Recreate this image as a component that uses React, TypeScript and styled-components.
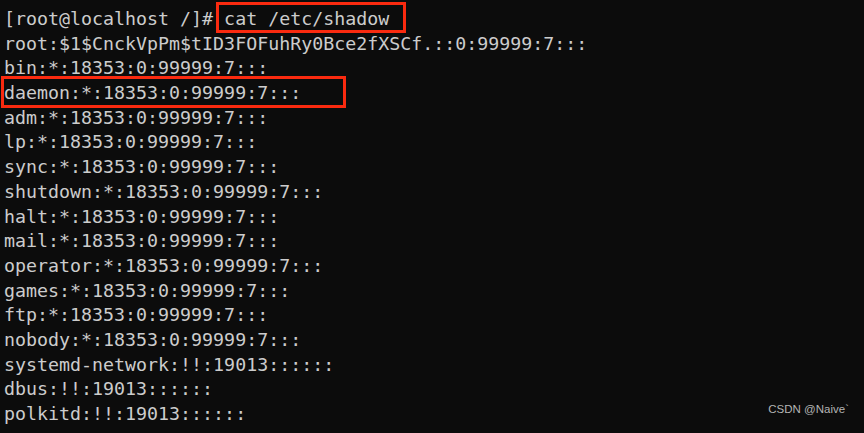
import React from "react";
import styled, { createGlobalStyle } from "styled-components";

const Global = createGlobalStyle`
  html, body { margin: 0; padding: 0; background: #0c0c0c; }
  #root { width: 864px; height: 433px; }
`;

const Terminal = styled.div`
  position: relative;
  width: 864px;
  height: 433px;
  box-sizing: border-box;
  padding: 7px 0 0 4px;
  background: #0c0c0c;
  color: #cccccc;
  font-family: "DejaVu Sans Mono", "Liberation Mono", monospace;
  font-size: 18.3px;
  overflow: hidden;
  display: flex;
  flex-direction: column;
`;

const Line = styled.div`
  height: 24.7px;
  line-height: 24.7px;
  white-space: pre;
`;

const Annotation = styled.div<{ $x: number; $y: number; $w: number; $h: number }>`
  position: absolute;
  left: ${(p) => p.$x}px;
  top: ${(p) => p.$y}px;
  width: ${(p) => p.$w}px;
  height: ${(p) => p.$h}px;
  box-sizing: border-box;
  border: 3px solid #fa2a0f;
  pointer-events: none;
`;

const Watermark = styled.div`
  position: absolute;
  right: 15px;
  bottom: 18px;
  font-family: "Liberation Sans", Arial, sans-serif;
  font-size: 11.5px;
  color: #b4b4b4;
`;

const lines = [
  "[root@localhost /]# cat /etc/shadow",
  "root:$1$CnckVpPm$tID3FOFuhRy0Bce2fXSCf.::0:99999:7:::",
  "bin:*:18353:0:99999:7:::",
  "daemon:*:18353:0:99999:7:::",
  "adm:*:18353:0:99999:7:::",
  "lp:*:18353:0:99999:7:::",
  "sync:*:18353:0:99999:7:::",
  "shutdown:*:18353:0:99999:7:::",
  "halt:*:18353:0:99999:7:::",
  "mail:*:18353:0:99999:7:::",
  "operator:*:18353:0:99999:7:::",
  "games:*:18353:0:99999:7:::",
  "ftp:*:18353:0:99999:7:::",
  "nobody:*:18353:0:99999:7:::",
  "systemd-network:!!:19013::::::",
  "dbus:!!:19013::::::",
  "polkitd:!!:19013::::::",
];

export default function App() {
  return (
    <>
      <Global />
      <Terminal>
        {lines.map((l, i) => (
          <Line key={i}>{l}</Line>
        ))}
        <Annotation $x={216} $y={2} $w={190} $h={31} />
        <Annotation $x={1} $y={76} $w={345} $h={32} />
        <Watermark>CSDN @Naive`</Watermark>
      </Terminal>
    </>
  );
}
